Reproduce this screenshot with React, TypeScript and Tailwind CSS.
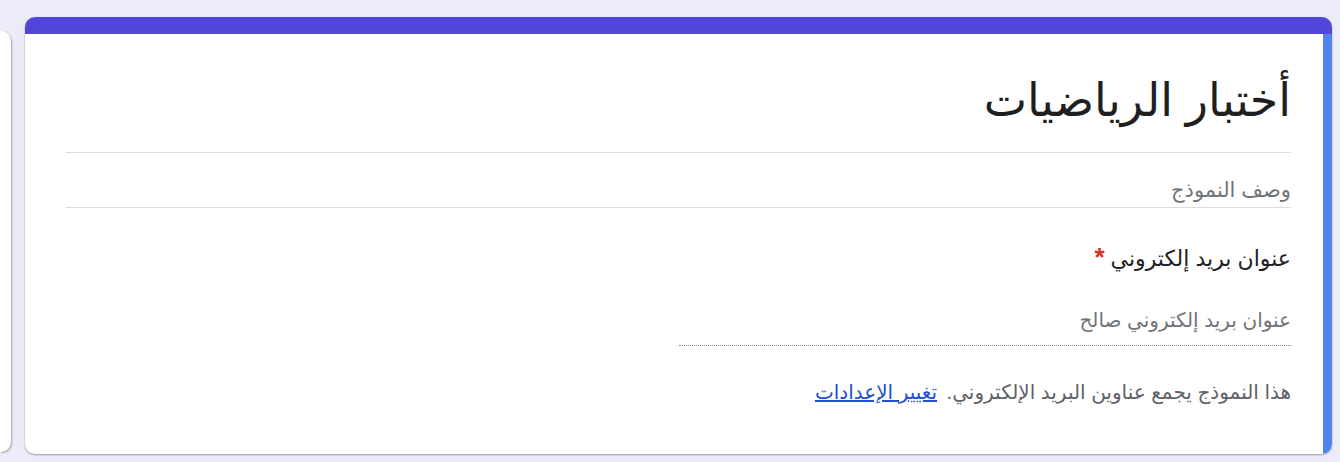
import React from 'react';

const font = "font-['Liberation_Sans','DejaVu_Sans',sans-serif]";

const App: React.FC = () => {
  return (
    <div className={`flex h-[462px] w-[1340px] overflow-hidden bg-[#ecebf8] ${font}`}>
      {/* previous card, mostly off screen */}
      <div className="mt-[31px] h-[421px] w-[11px] shrink-0 rounded-r-[10px] bg-white shadow-[1px_1px_2px_rgba(0,0,0,0.3)]" />

      <div
        dir="rtl"
        className="ml-[14px] mt-[17px] flex h-[437px] w-[1307px] shrink-0 flex-col overflow-hidden rounded-[10px] bg-white shadow-[0_1px_2px_rgba(0,0,0,0.35)]"
      >
        <div className="h-[17px] shrink-0 bg-[#5146d9]" />
        <div className="flex flex-1 flex-col border-r-[9px] border-[#5083ec] pl-[41px] pr-[32px]">
          <div className="border-b border-[#dadce0] pb-[26px] pt-[40px]">
            <h1 className="text-[46px] leading-[52px] text-[#1f1f1f]">أختبار الرياضيات</h1>
          </div>
          <div className="border-b border-[#dadce0] pb-[3px] pt-[23px]">
            <p className="text-[21px] leading-[28px] text-[#70757a]">وصف النموذج</p>
          </div>

          <div className="mt-[36px] flex items-center gap-[6px] text-[22px] leading-[30px] text-[#202124]">
            <span>عنوان بريد إلكتروني</span>
            <span className="-mt-[4px] text-[26px] font-bold leading-none text-[#d93025]">*</span>
          </div>

          <div className="mt-[32px] w-1/2 border-b border-dotted border-[#80868b] pb-[11px]">
            <span className="text-[20px] leading-[28px] text-[#70757a]">عنوان بريد إلكتروني صالح</span>
          </div>

          <p className="mt-[32px] text-[20px] leading-[28px] text-[#5f6368]">
            هذا النموذج يجمع عناوين البريد الإلكتروني.{' '}
            <a href="#" className="mr-1 text-[#2250d4] underline">
              تغيير الإعدادات
            </a>
          </p>
        </div>
      </div>
    </div>
  );
};

export default App;
